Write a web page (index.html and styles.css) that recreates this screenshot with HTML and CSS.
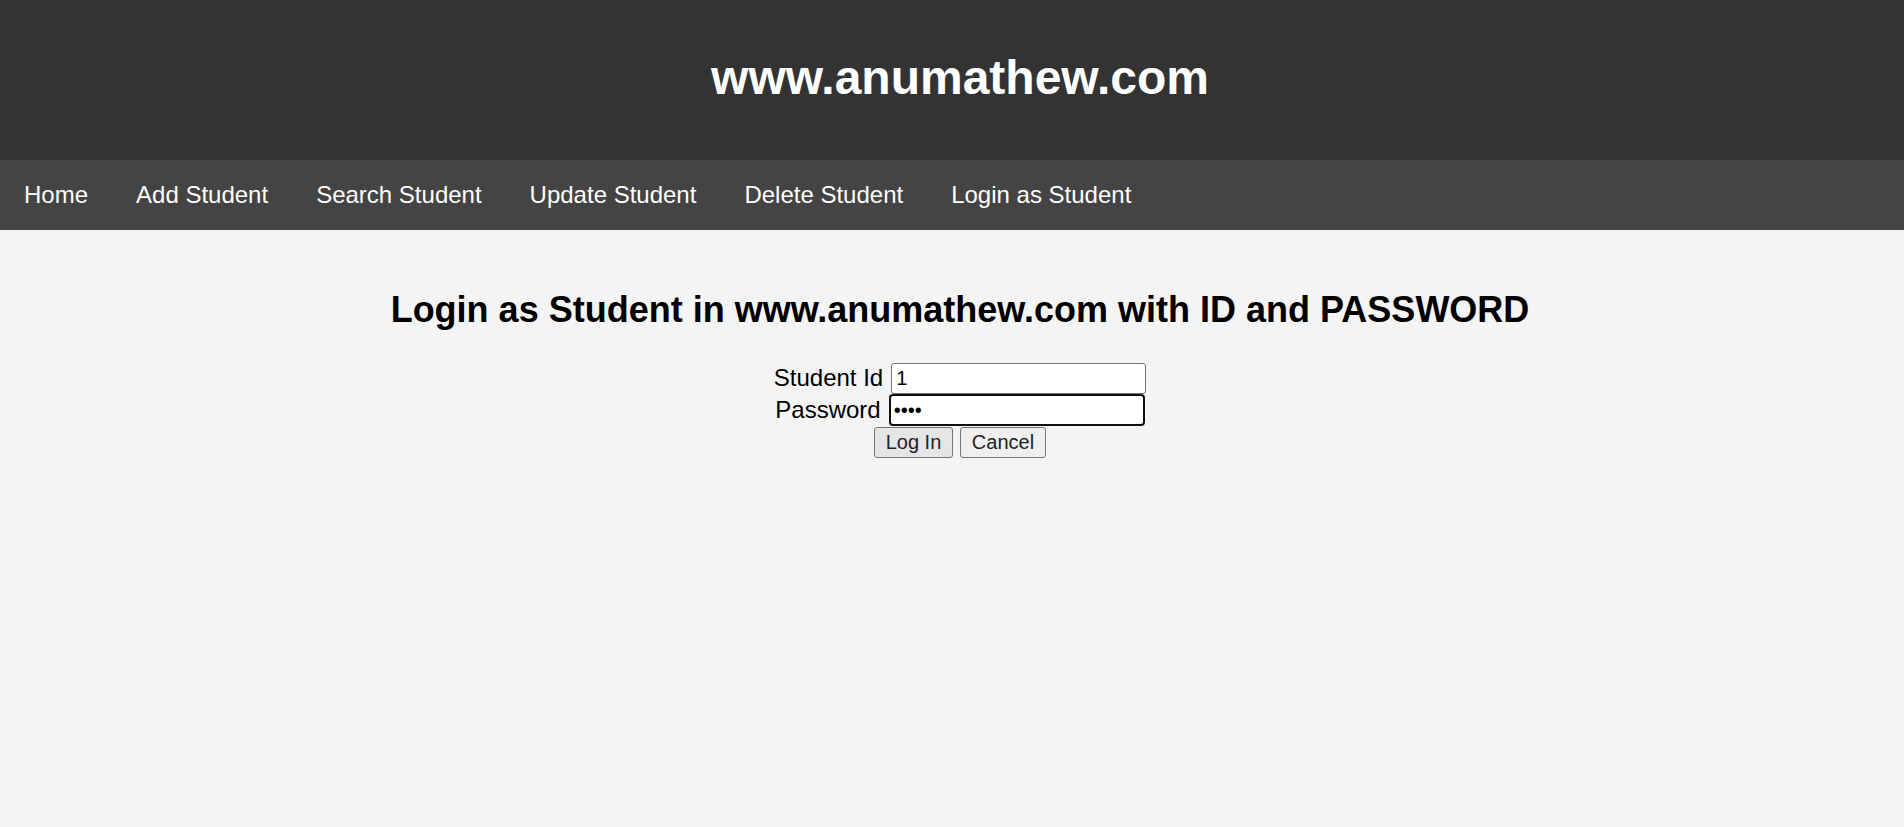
FILE: index.html
```html
<!DOCTYPE html>
<html lang="en">
<head>
<meta charset="utf-8">
<title>Login as Student</title>
<link rel="stylesheet" href="styles.css">
</head>
<body>
<header class="site-header">
  <h1 class="site-title">www.anumathew.com</h1>
</header>
<nav class="topnav">
  <a href="#" class="nav-link">Home</a>
  <a href="#" class="nav-link">Add Student</a>
  <a href="#" class="nav-link">Search Student</a>
  <a href="#" class="nav-link">Update Student</a>
  <a href="#" class="nav-link">Delete Student</a>
  <a href="#" class="nav-link">Login as Student</a>
</nav>
<main class="content">
  <h2 class="page-title">Login as Student in www.anumathew.com with ID and PASSWORD</h2>
  <form class="login-form">
    <div class="form-row">
      <label class="form-label" for="sid">Student Id</label>
      <input class="form-input" id="sid" type="text" value="1">
    </div>
    <div class="form-row">
      <label class="form-label" for="pwd">Password</label>
      <input class="form-input focused" id="pwd" type="password" value="abcd">
    </div>
    <div class="form-row buttons">
      <button type="button" class="btn btn-active">Log In</button>
      <button type="button" class="btn">Cancel</button>
    </div>
  </form>
</main>
</body>
</html>
```
FILE: styles.css
```css
html, body {
  margin: 0;
  padding: 0;
}
body {
  background: #f4f4f4;
  font-family: "Liberation Sans", Arial, sans-serif;
  font-size: 24px;
  color: #000;
  min-height: 827px;
}
.site-header {
  box-sizing: border-box;
  background: #333333;
  height: 160px;
  padding-left: 16px;
  padding-bottom: 5px;
  display: flex;
  align-items: center;
  justify-content: center;
}
.site-title {
  margin: 0;
  color: #fff;
  font-size: 48px;
  font-weight: bold;
  line-height: 55px;
}
.topnav {
  background: #444444;
  height: 70px;
  display: flex;
  align-items: center;
}
.nav-link {
  color: #fff;
  text-decoration: none;
  font-size: 24px;
  padding: 0 24px;
  line-height: 28px;
}
.content {
  display: flex;
  flex-direction: column;
  align-items: center;
  padding-top: 59px;
  padding-left: 16px;
}
.page-title {
  margin: 0;
  font-size: 36px;
  font-weight: bold;
  line-height: 41px;
}
.login-form {
  margin-top: 32px;
  display: flex;
  flex-direction: column;
  align-items: center;
}
.form-row {
  display: flex;
  align-items: center;
  justify-content: center;
  gap: 8px;
  height: 32px;
}
.form-label {
  font-size: 24px;
  line-height: 28px;
}
.form-input {
  box-sizing: border-box;
  width: 255px;
  height: 31px;
  margin: 0;
  padding: 1px 4px;
  border: 1px solid #767676;
  border-radius: 3px;
  background: #fff;
  font-family: "Liberation Sans", Arial, sans-serif;
  font-size: 20px;
  color: #000;
  outline: none;
}
.form-input.focused {
  border: 2px solid #101010;
  border-radius: 4px;
  width: 256px;
  height: 32px;
  padding: 0 3px;
}
.buttons {
  gap: 7px;
  height: 31px;
  margin-top: 1px;
}
.btn {
  box-sizing: border-box;
  height: 31px;
  margin: 0;
  padding: 0 9px;
  border: 1px solid #767676;
  border-radius: 3px;
  background: #efefef;
  font-family: "Liberation Sans", Arial, sans-serif;
  font-size: 20px;
  color: #222;
}
.btn-active {
  background: #e5e5e5;
  width: 79px;
}
.btn + .btn {
  width: 86px;
}
```
